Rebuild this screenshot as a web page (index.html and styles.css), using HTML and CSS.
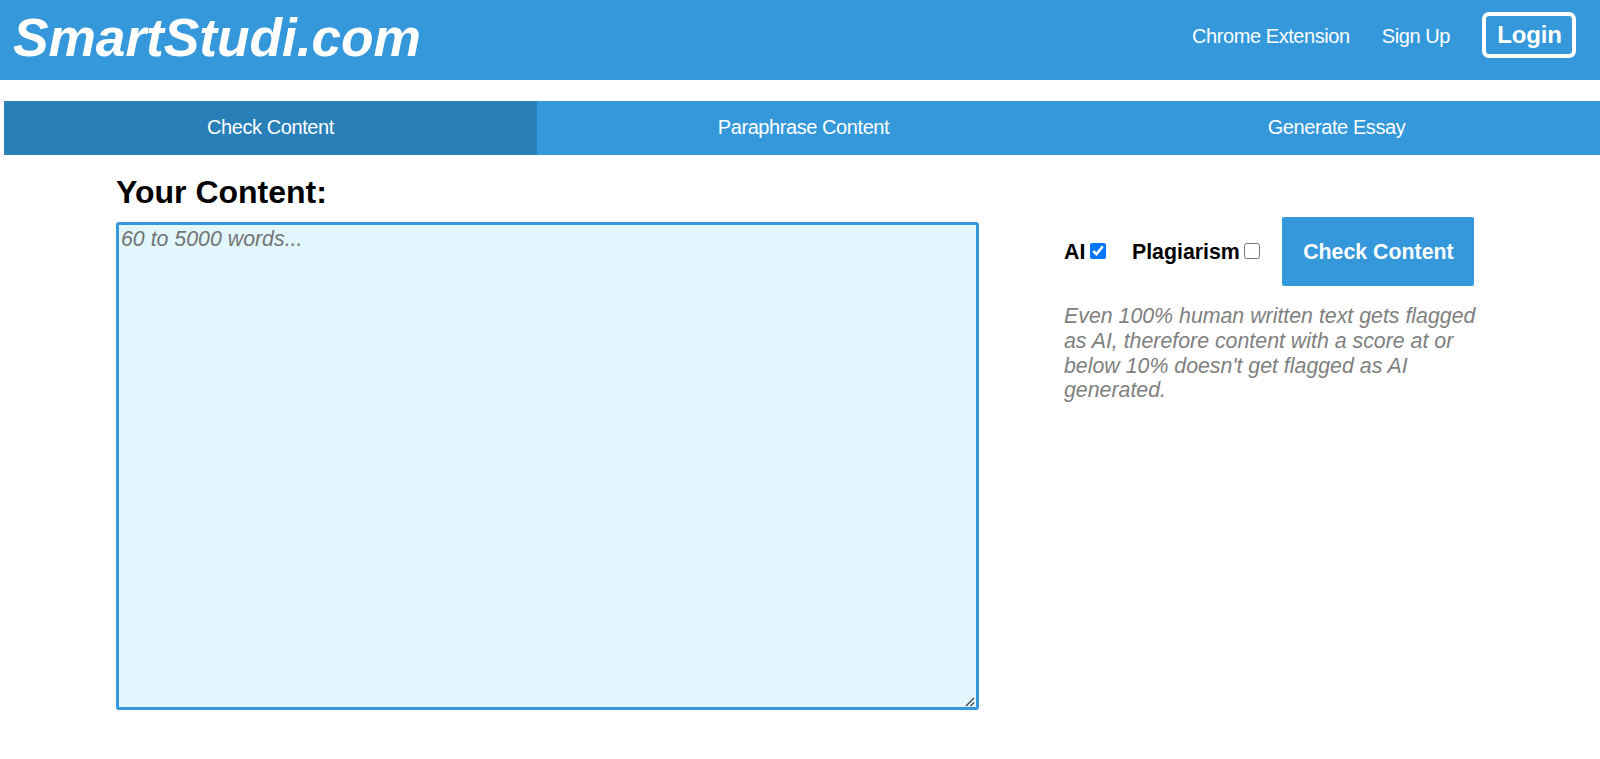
FILE: index.html
```html
<!DOCTYPE html>
<html lang="en">
<head>
    <meta charset="UTF-8">
    <title>SmartStudi.com</title>
    <link rel="stylesheet" href="styles.css">
</head>
<body>
    <header class="header">
        <h1 class="logo">SmartStudi.com</h1>
        <nav class="nav">
            <a class="nav-link" href="#">Chrome Extension</a>
            <a class="nav-link" href="#">Sign Up</a>
            <a class="login-btn" href="#">Login</a>
        </nav>
    </header>

    <div class="tabs">
        <button class="tab active">Check Content</button>
        <button class="tab">Paraphrase Content</button>
        <button class="tab">Generate Essay</button>
    </div>

    <main class="main">
        <section class="content">
            <h2 class="content-title">Your Content:</h2>
            <div class="input-wrap">
                <textarea class="content-input" placeholder="60 to 5000 words..."></textarea>
                <svg class="grip" width="10" height="10" viewBox="0 0 10 10" stroke="#444" stroke-width="1.4">
                    <path d="M1 9L9 1M5.5 9L9 5.5"/>
                </svg>
            </div>
        </section>

        <section class="options">
            <div class="options-row">
                <label class="option option-ai">AI<input class="option-box" type="checkbox" checked></label>
                <label class="option">Plagiarism<input class="option-box" type="checkbox"></label>
                <button class="check-btn">Check Content</button>
            </div>
            <p class="note">Even 100% human written text gets flagged as AI, therefore content with a score at or below 10% doesn't get flagged as AI generated.</p>
        </section>
    </main>
</body>
</html>
```

FILE: styles.css
```css
* {
    box-sizing: border-box;
}

body {
    margin: 0;
    font-family: Arial, "Liberation Sans", sans-serif;
    font-size: 21.33px;
    background: #fff;
    color: #000;
    overflow: hidden;
}

/* Header */
.header {
    display: flex;
    justify-content: space-between;
    align-items: flex-start;
    height: 80px;
    padding: 0 24px 0 13px;
    background: #3498db;
}

.logo {
    margin: 7px 0 0;
    font-size: 53.33px;
    font-style: italic;
    line-height: 61px;
    letter-spacing: -0.08px;
    color: #fff;
}

.nav {
    display: flex;
    align-items: center;
    margin-top: 12px;
}

.nav-link {
    margin-right: 32px;
    padding-top: 2px;
    color: #fff;
    font-size: 20px;
    letter-spacing: -0.42px;
    text-decoration: none;
}

.login-btn {
    width: 94px;
    height: 46px;
    padding-left: 1px;
    border: 4px solid #fff;
    border-radius: 7px;
    color: #fff;
    font-size: 24px;
    font-weight: bold;
    line-height: 37px;
    letter-spacing: -0.2px;
    text-align: center;
    text-decoration: none;
}

/* Tabs */
.tabs {
    display: flex;
    margin: 21px 0 0 4px;
    width: 1599px;
}

.tab {
    flex: 1;
    height: 54px;
    padding: 0 0 2px;
    border: none;
    background: #3498db;
    color: #fff;
    font-family: inherit;
    font-size: 20px;
    letter-spacing: -0.42px;
    cursor: pointer;
}

.tab.active {
    background: #2980b9;
}

.tab:hover {
    background: #2980b9;
}

/* Content */
.main {
    display: flex;
    padding: 19px 0 0 116px;
}

.content {
    width: 863px;
}

.content-title {
    margin: 0 0 11px;
    font-size: 32px;
    line-height: 37px;
}

.input-wrap {
    position: relative;
}

.content-input {
    display: block;
    width: 100%;
    height: 488px;
    padding: 2px;
    border: 3px solid #3498db;
    border-radius: 3px;
    background: #e1f6fd;
    font-family: inherit;
    font-size: 21.33px;
    font-style: italic;
    line-height: 24px;
}

.content-input::placeholder {
    color: #757575;
}

.content-input::-webkit-resizer {
    background: transparent;
}

.grip {
    position: absolute;
    right: 4px;
    bottom: 3px;
    fill: none;
    pointer-events: none;
}

/* Options */
.options {
    width: 424px;
    margin: 43px 0 0 85px;
}

.options-row {
    display: flex;
    align-items: center;
}

.option {
    display: flex;
    align-items: center;
    margin-right: 22px;
    padding-top: 1px;
    font-weight: bold;
}

.option-ai {
    margin-right: 26px;
}

.option-box {
    width: 16px;
    height: 16px;
    margin: 0 0 2px 4.6px;
}

.check-btn {
    width: 192px;
    height: 69px;
    padding: 1px 0 0;
    border: none;
    border-radius: 2px;
    background: #3498db;
    color: #fff;
    font-family: inherit;
    font-size: 21.33px;
    font-weight: bold;
    cursor: pointer;
}

.note {
    margin: 18px 0 0;
    color: #808080;
    font-style: italic;
    line-height: 24.8px;
}
```
